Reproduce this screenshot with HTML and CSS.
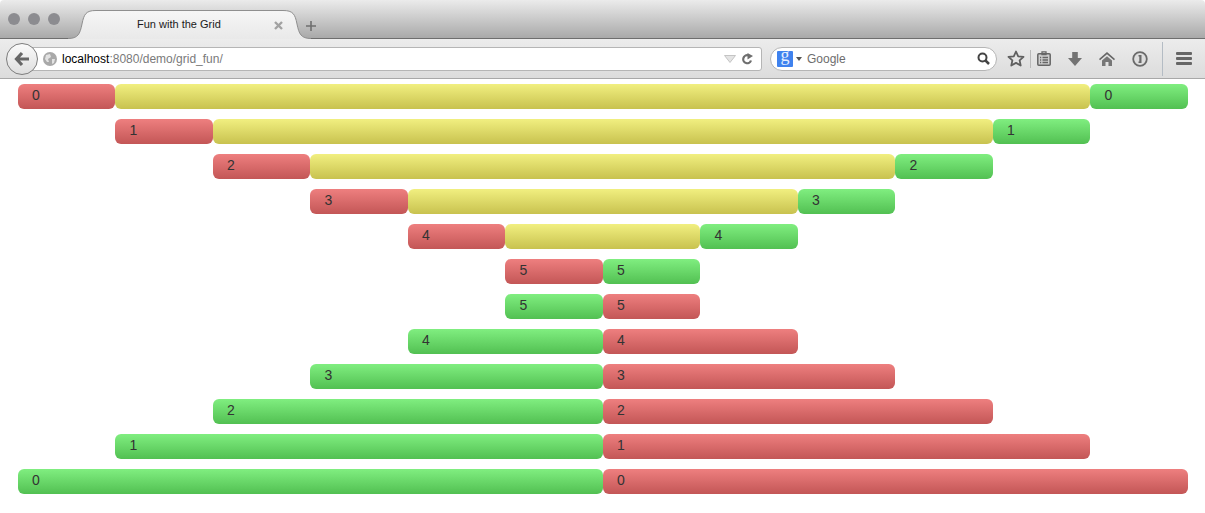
FILE: index.html
```html
<!DOCTYPE html>
<html>
  <head>
    <title>Fun with the Grid</title>
    <link rel="stylesheet" href="styles.css">
  </head>
  <body>
    <header class="browser">
      <div class="tabstrip">
        <div class="lights">
          <span class="light"></span>
          <span class="light"></span>
          <span class="light"></span>
        </div>
        <div class="tab">
          <svg class="tab-shape" width="243" height="29" viewBox="0 0 243 29">
            <defs>
              <linearGradient id="tabFill" x1="0" y1="0" x2="0" y2="1">
                <stop offset="0" stop-color="#f6f6f6" />
                <stop offset="1" stop-color="#e9e9e9" />
              </linearGradient>
            </defs>
            <path d="M0 28.5C10 28.5 12 24 14 14C16 4 18 .5 28 .5H215C225 .5 227 4 229 14C231 24 233 28.5 243 28.5V29H0Z" fill="url(#tabFill)" />
            <path d="M0 28.5C10 28.5 12 24 14 14C16 4 18 .5 28 .5H215C225 .5 227 4 229 14C231 24 233 28.5 243 28.5" fill="none" stroke="#8f8f8f" />
          </svg>
          <span class="tab-title">Fun with the Grid</span>
          <svg class="tab-close" width="9" height="9" viewBox="0 0 9 9">
            <path d="M1 1L8 8M8 1L1 8" stroke="#a2a2a2" stroke-width="2.4" />
          </svg>
        </div>
        <svg class="new-tab" width="10" height="10" viewBox="0 0 10 10">
          <path d="M5 0V10M0 5H10" stroke="#6f6f6f" stroke-width="1.6" />
        </svg>
      </div>

      <div class="navbar">
        <div class="back">
          <svg width="16" height="16" viewBox="0 0 16 16">
            <path d="M8 2L2.500 8L8 14M3 8H15" fill="none" stroke="#666" stroke-width="3.200" />
          </svg>
        </div>
        <div class="urlbar">
          <svg class="globe" width="14" height="14" viewBox="0 0 14 14">
            <circle cx="7" cy="7" r="7" fill="#a9a9a9" />
            <path d="M3 3L7 2L8 5L5 7L6 10L4 10L2 7ZM9 7L12 7L11 11L9 12Z" fill="#e2e2e2" />
          </svg>
          <span class="url"><b>localhost</b>:8080/demo/grid_fun/</span>
          <svg class="url-drop" width="12" height="8" viewBox="0 0 12 8">
            <path d="M.5 .5H11.5L6 7.5Z" fill="#e4e4e4" stroke="#c4c4c4" />
          </svg>
          <svg class="reload" width="12" height="12" viewBox="0 0 12 12">
            <path d="M10 7.500A4 4 0 1 1 7 2.300" fill="none" stroke="#6e6e6e" stroke-width="2.200" />
            <path d="M6.500 0V6.500L12 3Z" fill="#6e6e6e" />
          </svg>
        </div>
        <div class="searchbar">
          <div class="engine">
            <span class="engine-g">g</span>
          </div>
          <span class="caret"></span>
          <span class="search-text">Google</span>
          <svg class="magnifier" width="13" height="13" viewBox="0 0 13 13">
            <circle cx="5.500" cy="5.500" r="4" fill="none" stroke="#444" stroke-width="2" />
            <path d="M8.500 8.500L12 12" stroke="#444" stroke-width="2.500" />
          </svg>
        </div>
        <div class="tools">
          <svg class="tool star" width="18" height="17" viewBox="0 0 18 17">
            <path d="M9 1.500L11.200 6.300L16.500 6.900L12.600 10.400L13.700 15.500L9 12.900L4.300 15.500L5.400 10.400L1.500 6.900L6.800 6.300Z" fill="none" stroke="#5f5f5f" stroke-width="1.800" stroke-linejoin="round" />
          </svg>
          <span class="divider short"></span>
          <svg class="tool clip" width="14" height="15" viewBox="0 0 14 15">
            <rect x=".8" y="2.800" width="12.400" height="11.400" rx="1" fill="#cfcfcf" stroke="#666" stroke-width="1.500" />
            <path d="M5 .8H9V3.500H5ZM5.500 6.500H11M5.500 9H11M5.500 11.500H11M3 6.500H4.200M3 9H4.200M3 11.500H4.200" fill="none" stroke="#666" stroke-width="1.300" />
          </svg>
          <svg class="tool down" width="14" height="14" viewBox="0 0 14 14">
            <path d="M4.200 0H9.800V6H14L7 14L0 6H4.200Z" fill="#737373" />
          </svg>
          <svg class="tool home" width="16" height="14" viewBox="0 0 16 14">
            <path d="M8 0L16 7L15 8.200L8 2.300L1 8.200L0 7Z" fill="#666" />
            <path d="M3 8.500L8 4.200L13 8.500V14H9.500V10H6.500V14H3Z" fill="#777" />
          </svg>
          <svg class="tool info" width="16" height="16" viewBox="0 0 16 16">
            <circle cx="8" cy="8" r="6.800" fill="#dedede" stroke="#6a6a6a" stroke-width="1.800" />
            <path d="M6.500 4H9.500V12H6.500V10.500H7.300V5.500H6.500Z" fill="#6a6a6a" />
          </svg>
          <span class="divider tall"></span>
          <div class="menu">
            <span></span>
            <span></span>
            <span></span>
          </div>
        </div>
      </div>
    </header>

    <main class="grid">
      <div class="row">
        <div class="cell red from-1 to-2">0</div>
        <div class="cell yellow from-2 to-12"></div>
        <div class="cell green from-12 to-13">0</div>
      </div>
      <div class="row">
        <div class="cell red from-2 to-3">1</div>
        <div class="cell yellow from-3 to-11"></div>
        <div class="cell green from-11 to-12">1</div>
      </div>
      <div class="row">
        <div class="cell red from-3 to-4">2</div>
        <div class="cell yellow from-4 to-10"></div>
        <div class="cell green from-10 to-11">2</div>
      </div>
      <div class="row">
        <div class="cell red from-4 to-5">3</div>
        <div class="cell yellow from-5 to-9"></div>
        <div class="cell green from-9 to-10">3</div>
      </div>
      <div class="row">
        <div class="cell red from-5 to-6">4</div>
        <div class="cell yellow from-6 to-8"></div>
        <div class="cell green from-8 to-9">4</div>
      </div>
      <div class="row">
        <div class="cell red from-6 to-7">5</div>
        <div class="cell green from-7 to-8">5</div>
      </div>
      <div class="row">
        <div class="cell green from-6 to-7">5</div>
        <div class="cell red from-7 to-8">5</div>
      </div>
      <div class="row">
        <div class="cell green from-5 to-7">4</div>
        <div class="cell red from-7 to-9">4</div>
      </div>
      <div class="row">
        <div class="cell green from-4 to-7">3</div>
        <div class="cell red from-7 to-10">3</div>
      </div>
      <div class="row">
        <div class="cell green from-3 to-7">2</div>
        <div class="cell red from-7 to-11">2</div>
      </div>
      <div class="row">
        <div class="cell green from-2 to-7">1</div>
        <div class="cell red from-7 to-12">1</div>
      </div>
      <div class="row">
        <div class="cell green from-1 to-7">0</div>
        <div class="cell red from-7 to-13">0</div>
      </div>
    </main>
  </body>
</html>
```

FILE: styles.css
```css
* {
  box-sizing: border-box;
}

html,
body {
  height: 100%;
}

body {
  margin: 0;
  overflow: hidden;
  background: white;
  color: #333;
  font-family: "Liberation Sans", Arial, sans-serif;
  font-size: 14px;
}

/* browser window */

.browser {
  height: 79px;
}

.tabstrip {
  display: flex;
  height: 39px;
  padding-left: 8px;
  background: linear-gradient(to bottom, #ebebeb, #a9a9a9);
  border-bottom: 1px solid #6e6e6e;
  border-radius: 4px 4px 0 0;
}

.lights {
  display: flex;
  gap: 8px;
  padding-top: 13px;
}

.light {
  width: 12px;
  height: 12px;
  border-radius: 50%;
  background: #8c8c90;
}

.tab {
  position: relative;
  display: flex;
  width: 243px;
  height: 29px;
  margin: 10px 0 -1px 8px;
  padding: 7px 0 0 69px;
}

.tab-shape {
  position: absolute;
  top: 0;
  left: 0;
}

.tab-title {
  position: relative;
  font-size: 11px;
  line-height: 15px;
  color: #1a1a1a;
}

.tab-close {
  position: absolute;
  top: 11px;
  left: 206px;
}

.new-tab {
  margin: 21px 0 0 -5px;
}

.navbar {
  display: flex;
  align-items: center;
  height: 40px;
  padding: 0 7px 0 6px;
  background: linear-gradient(to bottom, #ececec, #dcdcdc);
  border-bottom: 1px solid #a8a8a8;
}

.back {
  position: relative;
  z-index: 1;
  display: flex;
  align-items: center;
  justify-content: center;
  flex: none;
  width: 32px;
  height: 32px;
  border: 1px solid #7d7d7d;
  border-radius: 50%;
  background: linear-gradient(to bottom, #fafafa, #dedede);
}

.urlbar {
  display: flex;
  align-items: center;
  width: 733px;
  height: 24px;
  margin-left: -9px;
  padding: 0 8px 0 13px;
  background: white;
  border: 1px solid #b5b5b5;
  border-radius: 0 3px 3px 0;
}

.globe {
  flex: none;
}

.url {
  flex: 1;
  margin-left: 5px;
  font-size: 12px;
  color: #7a7a7a;
}

.url b {
  font-weight: normal;
  color: black;
}

.url-drop {
  margin-right: 5px;
}

.searchbar {
  display: flex;
  align-items: center;
  width: 227px;
  height: 24px;
  margin-left: 8px;
  padding: 0 6px;
  background: white;
  border: 1px solid #b5b5b5;
  border-radius: 12px;
}

.engine {
  display: flex;
  justify-content: center;
  width: 16px;
  height: 16px;
  background: #3f82ee;
  border-radius: 1px;
}

.engine-g {
  margin-top: -4px;
  font-family: "Liberation Serif", serif;
  font-size: 18px;
  line-height: 16px;
  color: #e4eeff;
}

.caret {
  width: 0;
  height: 0;
  margin-left: 3px;
  border: 3.5px solid transparent;
  border-top: 4px solid #555;
  border-bottom: 0;
}

.search-text {
  flex: 1;
  margin-left: 5px;
  font-size: 12px;
  color: #6d6d6d;
}

.tools {
  display: flex;
  align-items: center;
  flex: none;
  height: 32px;
  margin-left: 10px;
}

.tool {
  flex: none;
}

.divider {
  flex: none;
  width: 1px;
}

.divider.short {
  height: 18px;
  margin: 0 6px 0 5px;
  background: #b9b9b9;
}

.divider.tall {
  height: 34px;
  margin-left: 14px;
  background: #b4bcc4;
}

.down {
  margin-left: 17px;
}

.home {
  margin-left: 17px;
}

.info {
  margin-left: 17px;
}

.menu {
  display: flex;
  flex-direction: column;
  gap: 2px;
  width: 16px;
  margin-left: 13px;
}

.menu span {
  height: 3px;
  background: #666;
  border-radius: 1px;
}

/* the pattern */

.grid {
  display: flex;
  flex-direction: column;
  gap: 10px;
  padding: 5px 17.1px 0 17.9px;
}

.row {
  display: grid;
  grid-template-columns: repeat(12, 1fr);
}

.cell {
  height: 25px;
  padding-left: 14px;
  line-height: 22px;
  border-radius: 6px;
}

.red {
  background: linear-gradient(to bottom, #ee7f7f, #c35656);
}

.yellow {
  background: linear-gradient(to bottom, #f1ef80, #c8c24f);
}

.green {
  background: linear-gradient(to bottom, #80ee80, #52c052);
}

.from-1 { grid-column-start: 1; }
.from-2 { grid-column-start: 2; }
.from-3 { grid-column-start: 3; }
.from-4 { grid-column-start: 4; }
.from-5 { grid-column-start: 5; }
.from-6 { grid-column-start: 6; }
.from-7 { grid-column-start: 7; }
.from-8 { grid-column-start: 8; }
.from-9 { grid-column-start: 9; }
.from-10 { grid-column-start: 10; }
.from-11 { grid-column-start: 11; }
.from-12 { grid-column-start: 12; }

.to-2 { grid-column-end: 2; }
.to-3 { grid-column-end: 3; }
.to-4 { grid-column-end: 4; }
.to-5 { grid-column-end: 5; }
.to-6 { grid-column-end: 6; }
.to-7 { grid-column-end: 7; }
.to-8 { grid-column-end: 8; }
.to-9 { grid-column-end: 9; }
.to-10 { grid-column-end: 10; }
.to-11 { grid-column-end: 11; }
.to-12 { grid-column-end: 12; }
.to-13 { grid-column-end: 13; }
```
